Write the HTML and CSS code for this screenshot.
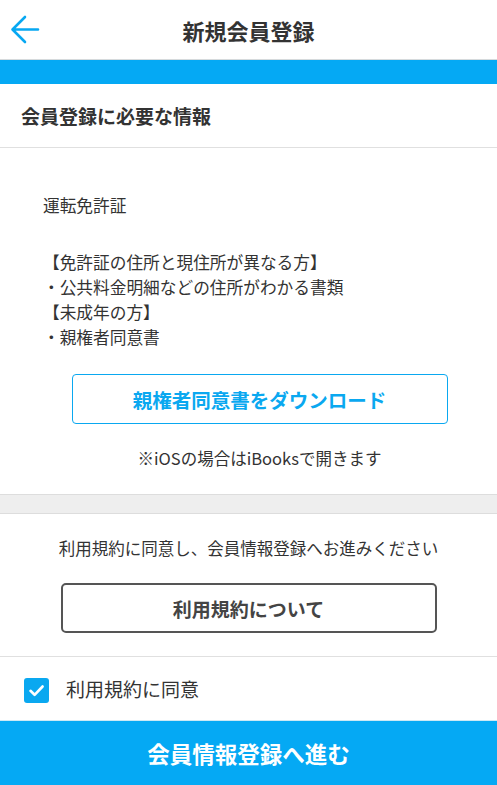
FILE: index.html
```html
<!DOCTYPE html>
<html lang="ja">
<head>
  <meta charset="UTF-8">
  <meta name="viewport" content="width=device-width, initial-scale=1.0">
  <title>新規会員登録</title>
  <link rel="stylesheet" href="styles.css">
</head>
<body>
  <div id="page">
    <header class="topbar">
      <a class="back" href="#" aria-label="戻る">
        <svg width="30" height="30" viewBox="0 0 30 30">
          <path d="M28 14.5H3 M15 2L2.5 14.5L15 27" fill="none" stroke="#07a8f2" stroke-width="2.6" stroke-linecap="round" stroke-linejoin="round"/>
        </svg>
      </a>
      <h1 class="title">新規会員登録</h1>
      <span></span>
    </header>
    <div class="progress"></div>

    <h2 class="section-title">会員登録に必要な情報</h2>

    <div class="info">
      <p class="doc">運転免許証</p>
      <ul class="notes">
        <li>【免許証の住所と現住所が異なる方】</li>
        <li>・公共料金明細などの住所がわかる書類</li>
        <li>【未成年の方】</li>
        <li>・親権者同意書</li>
      </ul>
      <button type="button" class="btn-download">親権者同意書をダウンロード</button>
      <p class="ios-note">※iOSの場合はiBooksで開きます</p>
    </div>

    <div class="band"></div>

    <div class="terms">
      <p class="terms-text">利用規約に同意し、会員情報登録へお進みください</p>
      <button type="button" class="btn-terms">利用規約について</button>
    </div>

    <label class="agree">
      <span class="check">
        <svg width="25" height="25" viewBox="0 0 25 25">
          <path d="M6.5 12.8L10.6 16.8L18.6 8.5" fill="none" stroke="#fff" stroke-width="2.6" stroke-linecap="round" stroke-linejoin="round"/>
        </svg>
      </span>
      利用規約に同意
    </label>

    <button type="button" class="btn-next">会員情報登録へ進む</button>
  </div>
</body>
</html>
```

FILE: styles.css
```css
body {
  font-family: "Noto Sans CJK JP", "Noto Sans", sans-serif;
  margin: 0;
  padding: 0;
  background: #fff;
  color: #333;
}

#page {
  width: 497px;
  display: flex;
  flex-direction: column;
}

#page > * {
  flex-shrink: 0;
}

button {
  font-family: inherit;
  cursor: pointer;
}

.topbar {
  height: 59px;
  display: grid;
  grid-template-columns: 50px 1fr 50px;
  align-items: center;
  border-bottom: 1px solid #d6dadc;
}

.back {
  display: flex;
  padding-left: 10px;
  padding-top: 1px;
}

.title {
  margin: 0;
  text-align: center;
  font-size: 22px;
  font-weight: 700;
  color: #333;
}

.progress {
  height: 24px;
  background: #05a9f4;
}

.section-title {
  margin: 0;
  height: 63px;
  line-height: 63px;
  padding-left: 21px;
  font-size: 19px;
  font-weight: 700;
  color: #333;
  border-bottom: 1px solid #e0e0e0;
}

.info {
  padding: 45px 21px 23px 43px;
  display: flex;
  flex-direction: column;
  font-size: 16.7px;
  line-height: 25px;
}

.doc {
  margin: 0 0 32px;
}

.notes {
  list-style: none;
  margin: 0;
  padding: 0;
}

.btn-download {
  align-self: center;
  width: 376px;
  height: 50px;
  margin-top: 24px;
  background: #fff;
  border: 1.5px solid #0aa8f0;
  border-radius: 4px;
  color: #0aa8f0;
  font-size: 19.5px;
  font-weight: 700;
}

.ios-note {
  margin: 22px 0 0;
  text-align: center;
  font-size: 16.5px;
}

.band {
  height: 18px;
  background: #eee;
  border-top: 1px solid #ddd;
  border-bottom: 1px solid #ddd;
}

.terms {
  padding: 22px 0 23px;
  display: flex;
  flex-direction: column;
  align-items: center;
  border-bottom: 1px solid #e0e0e0;
}

.terms-text {
  margin: 0;
  font-size: 16.5px;
  line-height: 25px;
}

.btn-terms {
  width: 376px;
  height: 50px;
  margin-top: 22px;
  background: #fff;
  border: 2px solid #555;
  border-radius: 5px;
  color: #444;
  font-size: 19px;
  font-weight: 700;
}

.agree {
  height: 63px;
  display: flex;
  align-items: center;
  gap: 17px;
  padding-left: 24px;
  font-size: 19px;
  color: #333;
}

.check {
  width: 25px;
  height: 25px;
  border-radius: 3px;
  background: #0aa8f0;
  display: flex;
  margin-top: 3px;
}

.btn-next {
  height: 65px;
  width: 100%;
  border: none;
  background: #05a9f4;
  color: #fff;
  font-size: 22.5px;
  font-weight: 700;
  border-top: 1px solid #cde9f5;
}
```
